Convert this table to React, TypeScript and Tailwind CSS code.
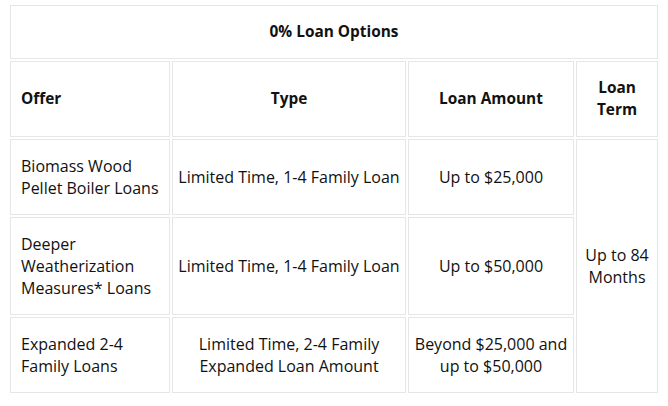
const rows = [
  {
    offer: "Biomass Wood Pellet Boiler Loans",
    type: "Limited Time, 1-4 Family Loan",
    amount: "Up to $25,000",
  },
  {
    offer: "Deeper Weatherization Measures* Loans",
    type: "Limited Time, 1-4 Family Loan",
    amount: "Up to $50,000",
  },
  {
    offer: "Expanded 2-4 Family Loans",
    type: "Limited Time, 2-4 Family Expanded Loan Amount",
    amount: "Beyond $25,000 and up to $50,000",
  },
];

const cell =
  "border border-[#e6e6e6] py-[15px] leading-[22px] align-middle";
const head = "text-[15.4px] font-bold";

export default function App() {
  return (
    <div
      className="w-[668px] h-[406px] bg-white pl-2 pt-[3px] text-[16px] text-[#111]"
      style={{ fontFamily: '"Open Sans", "Liberation Sans", sans-serif' }}
    >
      <table className="w-[652px] table-fixed border-separate border-spacing-[2px]">
        <colgroup>
          <col className="w-[160px]" />
          <col className="w-[234px]" />
          <col className="w-[166px]" />
          <col className="w-[82px]" />
        </colgroup>
        <thead>
          <tr>
            <th colSpan={4} className={`${cell} ${head} px-[10px] text-center`}>
              0% Loan Options
            </th>
          </tr>
          <tr>
            <th className={`${cell} ${head} pl-[10px] pr-[4px] text-left`}>
              Offer
            </th>
            <th className={`${cell} ${head} px-[4px] text-center`}>Type</th>
            <th className={`${cell} ${head} px-[4px] text-center`}>
              Loan Amount
            </th>
            <th className={`${cell} ${head} px-[8px] text-center`}>
              Loan Term
            </th>
          </tr>
        </thead>
        <tbody>
          {rows.map((row, i) => (
            <tr key={i}>
              <td className={`${cell} pl-[10px] pr-[4px] text-left`}>
                {row.offer}
              </td>
              <td className={`${cell} px-[4px] text-center`}>{row.type}</td>
              <td className={`${cell} px-[4px] text-center`}>{row.amount}</td>
              {i === 0 && (
                <td
                  rowSpan={3}
                  className={`${cell} px-[8px] text-center`}
                >
                  Up to 84 Months
                </td>
              )}
            </tr>
          ))}
        </tbody>
      </table>
    </div>
  );
}
